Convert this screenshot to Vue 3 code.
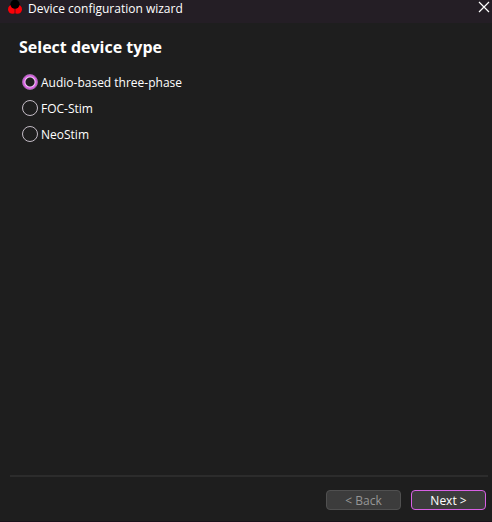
<script setup>
import { ref } from 'vue'

const devices = [
  { value: 'audio', label: 'Audio-based three-phase' },
  { value: 'foc', label: 'FOC-Stim' },
  { value: 'neo', label: 'NeoStim' },
]
const selected = ref('audio')
</script>

<template>
  <div class="window">
    <header class="titlebar">
      <svg class="logo" width="14" height="14" viewBox="0 0 14 14" aria-hidden="true">
        <circle cx="4.5" cy="9.3" r="4.5" fill="#fb0007" />
        <circle cx="9.5" cy="9.3" r="4.5" fill="#fb0007" />
        <path d="M7 8v6" stroke="#6d0a10" stroke-width="1" />
        <circle cx="7" cy="4.2" r="4.6" fill="#000" />
      </svg>
      <span class="caption">Device configuration wizard</span>
      <button class="close" type="button" aria-label="Close">
        <svg width="12" height="12" viewBox="0 0 12 12" aria-hidden="true">
          <path d="M1 1L11 11M11 1L1 11" stroke="#fff" stroke-width="1.2" />
        </svg>
      </button>
    </header>

    <main class="page">
      <h1>Select device type</h1>
      <div class="options" role="radiogroup" aria-label="Select device type">
        <label v-for="d in devices" :key="d.value" class="option">
          <input v-model="selected" type="radio" name="device" :value="d.value" />
          <span>{{ d.label }}</span>
        </label>
      </div>
    </main>

    <footer class="actions">
      <button class="btn" type="button" disabled>&lt; Back</button>
      <button class="btn primary" type="button">Next &gt;</button>
    </footer>
  </div>
</template>

<style>
body {
  background: #1e1e1e;
}
</style>

<style scoped>
.window {
  box-sizing: border-box;
  display: flex;
  flex-direction: column;
  min-height: 100vh;
  background: #1e1e1e;
  border-bottom: 1px solid #19121b;
  color: #fff;
  font-family: "Open Sans", "Noto Sans", sans-serif;
  font-size: 12px;
  line-height: 16px;
}

.titlebar {
  display: flex;
  align-items: flex-start;
  height: 23px;
  padding-left: 8px;
  background: #241e25;
}

.caption {
  flex: 1;
  margin-left: 6px;
  line-height: 18px;
}

.close {
  display: flex;
  padding: 1px 2px;
  border: 0;
  background: none;
}

.page {
  flex: 1;
  padding: 12px 19px;
}

h1 {
  margin: 0;
  font-size: 16px;
  line-height: 24px;
  font-weight: 700;
}

.options {
  display: flex;
  flex-direction: column;
  align-items: flex-start;
  gap: 8px;
  margin-top: 14px;
  padding-left: 3px;
}

.option {
  display: flex;
  align-items: center;
  gap: 3px;
  line-height: 18px;
}

.option span {
  padding-top: 1px;
  margin-bottom: -1px;
}

.option input {
  appearance: none;
  box-sizing: border-box;
  width: 16px;
  height: 16px;
  margin: 0;
  border: 1px solid #c4bcc6;
  border-radius: 50%;
}

.option input:checked {
  border-color: #a66bad;
  background: radial-gradient(circle, #1e1e1e 4px, #f3c6f7 5px, #d860e4 6px);
  background-origin: border-box;
}

.actions {
  display: flex;
  justify-content: flex-end;
  gap: 10px;
  margin-left: 10px;
  margin-right: 4px;
  padding: 13px 2px 11px;
  border-top: 2px solid #2c2c2c;
}

.btn {
  box-sizing: border-box;
  width: 75px;
  height: 20px;
  padding: 1px 0 0;
  border: 1px solid #505050;
  border-radius: 4px;
  background: #3c3c3c;
  color: #fff;
  font: inherit;
  line-height: 18px;
}

.btn:disabled {
  color: #969696;
}

.primary {
  border-color: #d860e4;
}
</style>
